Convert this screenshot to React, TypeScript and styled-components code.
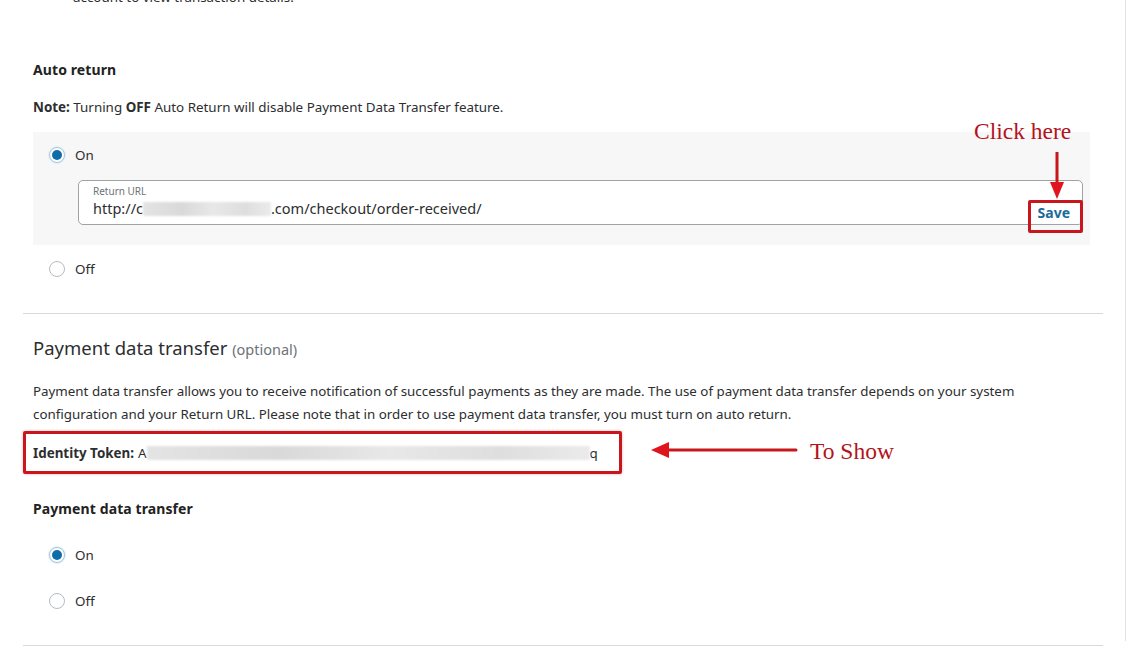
import React from 'react';
import styled, { createGlobalStyle } from 'styled-components';

const GlobalStyle = createGlobalStyle`
  html, body {
    margin: 0;
    padding: 0;
    background: #ffffff;
  }
  body {
    font-family: "Noto Sans", "Open Sans", Arial, sans-serif;
    color: #2c2e2f;
  }
`;

const Page = styled.div`
  width: 1133px;
  height: 653px;
  overflow: hidden;
  background: #fff;
`;

const Column = styled.div`
  width: 1126px;
  height: 653px;
  border-right: 1px solid #e3e3e3;
  box-sizing: border-box;
`;

const Panel = styled.div`
  width: 1080px;
  margin-left: 23px;
`;

const Content = styled.div`
  padding-left: 10px;
  position: relative;
`;

// only the lower half of the previous line is still on screen
const TopNote = styled.div`
  margin-top: -12px;
  padding-left: 40px;
  font-size: 13.4px;
  line-height: 18px;
`;

const Label = styled.div<{ $mt: number }>`
  margin-top: ${p => p.$mt}px;
  font-size: 14px;
  font-weight: 700;
  line-height: 20px;
  color: #222;
  letter-spacing: 0.1px;
`;

const Text = styled.div<{ $mt: number }>`
  margin-top: ${p => p.$mt}px;
  font-size: 13.4px;
  line-height: 20px;
`;

const Para = styled.p`
  margin: 18px 0 0;
  font-size: 13.35px;
  line-height: 23px;
  width: 1010px;
`;

const Heading = styled.h2`
  margin: 21px 0 0;
  font-size: 18.5px;
  font-weight: 400;
  line-height: 26px;
  color: #2c2e2f;
`;

const Optional = styled.span`
  font-size: 14.5px;
  color: #6c7378;
`;

const GrayBox = styled.div`
  margin-top: 15px;
  width: 1057px;
  height: 113px;
  box-sizing: border-box;
  background: #f7f7f7;
  padding: 13px 7px 0 16px;
  position: relative;
`;

const RadioRow = styled.div<{ $mt: number; $pl?: number }>`
  display: flex;
  align-items: center;
  gap: 10px;
  height: 20px;
  margin-top: ${p => p.$mt}px;
  padding-left: ${p => p.$pl ?? 0}px;
  font-size: 13.4px;
`;

const Radio = styled.span<{ $on?: boolean }>`
  width: 16px;
  height: 16px;
  border-radius: 50%;
  box-sizing: border-box;
  background: #fff;
  border: 1px solid ${p => (p.$on ? '#a9c4da' : '#b7bcbf')};
  display: flex;
  align-items: center;
  justify-content: center;
  box-shadow: ${p => (p.$on ? '0 0 1px 1px #e3eef6' : 'none')};
  &::after {
    content: '';
    width: 10px;
    height: 10px;
    border-radius: 50%;
    background: ${p => (p.$on ? '#0f6cab' : 'transparent')};
  }
`;

const Field = styled.div`
  margin: 15px 0 0 29px;
  height: 45px;
  box-sizing: border-box;
  border: 1px solid #9da3a6;
  border-radius: 5px;
  background: #fff;
  padding: 4px 12px 0 14px;
  display: flex;
  align-items: flex-start;
  justify-content: space-between;
`;

const FieldText = styled.div`
  display: flex;
  flex-direction: column;
`;

const FieldLabel = styled.span`
  font-size: 10px;
  line-height: 13px;
  color: #6c7378;
`;

const FieldValue = styled.span`
  font-size: 14.5px;
  line-height: 20px;
  color: #2c2e2f;
`;

const Blurred = styled.span<{ $w: number }>`
  display: inline-block;
  width: ${p => p.$w}px;
  height: 14px;
  vertical-align: -2px;
  background: linear-gradient(90deg, #e4e4e4, #d9d9d9 30%, #e8e8e8 55%, #dedede 80%, #ebebeb);
  filter: blur(1.2px);
`;

const SaveButton = styled.span`
  margin-top: 20px;
  font-size: 14px;
  font-weight: 700;
  color: #1d6a99;
  line-height: 16px;
`;

const Divider = styled.hr<{ $mt: number }>`
  margin: ${p => p.$mt}px 0 0;
  border: none;
  border-top: 1px solid #d9d9d9;
  height: 0;
`;

const TokenBox = styled.div`
  margin: 5px 0 0 -10px;
  width: 599px;
  height: 43px;
  box-sizing: border-box;
  border: 3px solid #c8161d;
  border-radius: 2px;
  display: flex;
  align-items: center;
  padding-left: 7px;
  font-size: 13.4px;
  position: relative;
  box-shadow: 0 0 3px rgba(200, 22, 29, 0.35);
`;

const TokenLabel = styled.b`
  font-weight: 700;
  margin-right: 4px;
`;

const Callout = styled.span`
  position: absolute;
  font-family: "Liberation Serif", "Times New Roman", serif;
  font-size: 23.5px;
  line-height: 26px;
  color: #b5121b;
  white-space: nowrap;
  text-shadow: 0 0 2px #fff;
`;

const ArrowSvg = styled.svg`
  position: absolute;
  overflow: visible;
`;

const SaveMark = styled.div`
  position: absolute;
  left: 995px;
  top: 68px;
  width: 55px;
  height: 33px;
  box-sizing: border-box;
  border: 3px solid #c8161d;
  border-radius: 2px;
`;

export default function App() {
  return (
    <Page>
      <GlobalStyle />
      <Column>
        <Panel>
          <Content>
            <TopNote>account to view transaction details.</TopNote>
            <Label $mt={54}>Auto return</Label>
            <Text $mt={17}>
              <b>Note:</b> Turning <b>OFF</b> Auto Return will disable Payment Data Transfer feature.
            </Text>

            <GrayBox>
              <RadioRow $mt={0}>
                <Radio $on />
                On
              </RadioRow>
              <Field>
                <FieldText>
                  <FieldLabel>Return URL</FieldLabel>
                  <FieldValue>
                    http://c<Blurred $w={128} />.com/checkout/order-received/
                  </FieldValue>
                </FieldText>
                <SaveButton>Save</SaveButton>
              </Field>
              <SaveMark />
              <Callout style={{ left: 941, top: -14 }}>Click here</Callout>
              <ArrowSvg width="20" height="50" style={{ left: 1014, top: 20 }}>
                <line x1="10" y1="0" x2="10" y2="32" stroke="#c8161d" strokeWidth="3" />
                <polygon points="3,30 17,30 10,47" fill="#e0141c" />
              </ArrowSvg>
            </GrayBox>

            <RadioRow $mt={14} $pl={16}>
              <Radio />
              Off
            </RadioRow>
          </Content>

          <Divider $mt={34} />

          <Content>
            <Heading>
              Payment data transfer <Optional>(optional)</Optional>
            </Heading>
            <Para>
              Payment data transfer allows you to receive notification of successful payments as they are made. The use
              of payment data transfer depends on your system configuration and your Return URL. Please note that in
              order to use payment data transfer, you must turn on auto return.
            </Para>
            <TokenBox>
              <TokenLabel>Identity Token:</TokenLabel>A<Blurred $w={443} />q
              <ArrowSvg width="150" height="20" style={{ left: 625, top: 6 }}>
                <line x1="14" y1="10" x2="145" y2="10" stroke="#c8161d" strokeWidth="3" strokeLinecap="round" />
                <polygon points="0,10 18,2 18,18" fill="#e0141c" />
              </ArrowSvg>
              <Callout style={{ left: 784, top: 4 }}>To Show</Callout>
            </TokenBox>

            <Label $mt={25}>Payment data transfer</Label>
            <RadioRow $mt={26} $pl={16}>
              <Radio $on />
              On
            </RadioRow>
            <RadioRow $mt={26} $pl={16}>
              <Radio />
              Off
            </RadioRow>
          </Content>

          <Divider $mt={34} />
        </Panel>
      </Column>
    </Page>
  );
}
